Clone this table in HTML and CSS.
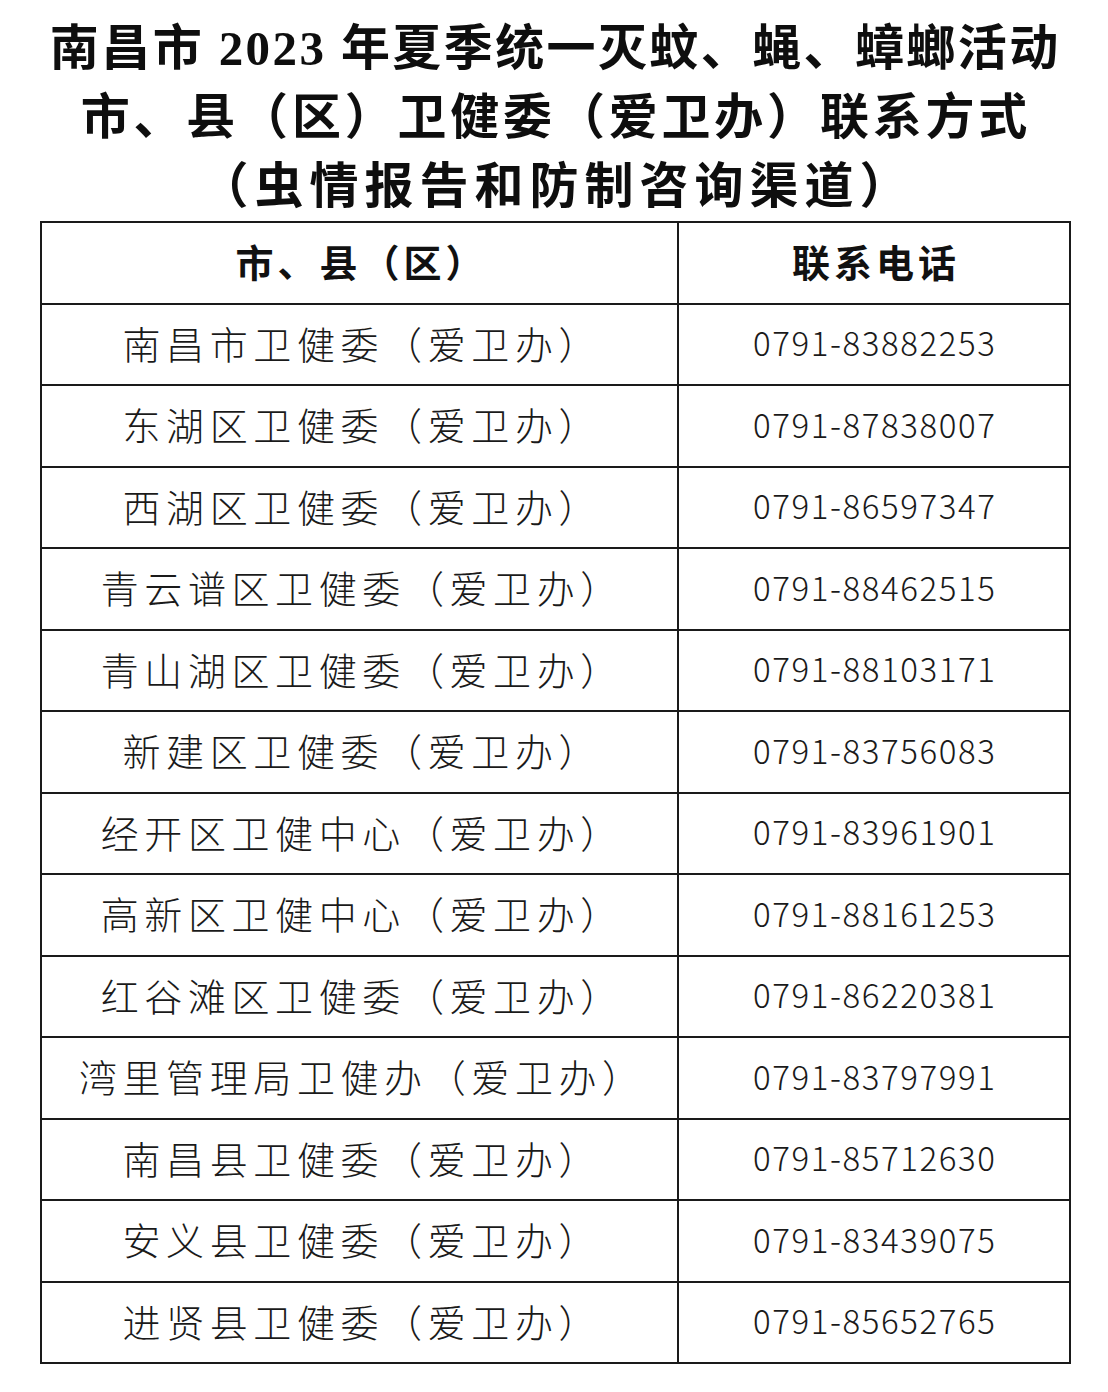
FILE: index.html
```html
<!DOCTYPE html>
<html lang="zh-CN">
<head>
<meta charset="utf-8">
<title>南昌市2023年夏季统一灭蚊、蝇、蟑螂活动联系方式</title>
<link rel="stylesheet" href="styles.css">
</head>
<body>
<div class="title">
  <div class="t-line t1">南昌市 2023 年夏季统一灭蚊、蝇、蟑螂活动</div>
  <div class="t-line t2">市、县（区）卫健委（爱卫办）联系方式</div>
  <div class="t-line t3">（虫情报告和防制咨询渠道）</div>
</div>
<div class="grid">
  <div class="cell head">市、县（区）</div>
  <div class="cell head">联系电话</div>

  <div class="cell name">南昌市卫健委（爱卫办）</div>
  <div class="cell phone">0791-83882253</div>

  <div class="cell name">东湖区卫健委（爱卫办）</div>
  <div class="cell phone">0791-87838007</div>

  <div class="cell name">西湖区卫健委（爱卫办）</div>
  <div class="cell phone">0791-86597347</div>

  <div class="cell name">青云谱区卫健委（爱卫办）</div>
  <div class="cell phone">0791-88462515</div>

  <div class="cell name">青山湖区卫健委（爱卫办）</div>
  <div class="cell phone">0791-88103171</div>

  <div class="cell name">新建区卫健委（爱卫办）</div>
  <div class="cell phone">0791-83756083</div>

  <div class="cell name">经开区卫健中心（爱卫办）</div>
  <div class="cell phone">0791-83961901</div>

  <div class="cell name">高新区卫健中心（爱卫办）</div>
  <div class="cell phone">0791-88161253</div>

  <div class="cell name">红谷滩区卫健委（爱卫办）</div>
  <div class="cell phone">0791-86220381</div>

  <div class="cell name">湾里管理局卫健办（爱卫办）</div>
  <div class="cell phone">0791-83797991</div>

  <div class="cell name">南昌县卫健委（爱卫办）</div>
  <div class="cell phone">0791-85712630</div>

  <div class="cell name">安义县卫健委（爱卫办）</div>
  <div class="cell phone">0791-83439075</div>

  <div class="cell name">进贤县卫健委（爱卫办）</div>
  <div class="cell phone">0791-85652765</div>
</div>
</body>
</html>
```
FILE: styles.css
```css
html, body {
  margin: 0;
  padding: 0;
  background: #ffffff;
}

body {
  width: 1108px;
  height: 1392px;
  color: #141414;
  font-family: "Noto Sans CJK SC", sans-serif;
}

.title {
  padding-top: 14px;
  text-align: center;
  font-family: "Liberation Serif", "Noto Sans CJK SC", serif;
  font-weight: 700;
  font-size: 49px;
  line-height: 69px;
  color: #0e0e0e;
}

.t-line {
  white-space: nowrap;
}

.t1 {
  letter-spacing: 2.4px;
  padding-left: 2.4px;
}

.t2 {
  letter-spacing: 3.8px;
  padding-left: 3.8px;
}

.t3 {
  letter-spacing: 6px;
  padding-left: 6px;
}

.grid {
  margin-left: 40px;
  display: grid;
  grid-template-columns: 637px 392px;
  grid-auto-rows: 81.5px;
  width: max-content;
  border-top: 2px solid #1a1a1a;
  border-left: 2px solid #1a1a1a;
}

.cell {
  border-right: 2px solid #1a1a1a;
  border-bottom: 2px solid #1a1a1a;
  padding-bottom: 4px;
  display: flex;
  align-items: center;
  justify-content: center;
  white-space: nowrap;
}

.head {
  font-family: "Noto Sans CJK SC", sans-serif;
  font-weight: 700;
  font-size: 38px;
  letter-spacing: 4px;
  padding-left: 4px;
  color: #111;
}

.name {
  font-family: "Noto Sans CJK SC", sans-serif;
  font-weight: 300;
  font-size: 38px;
  letter-spacing: 5.6px;
  padding-left: 5.6px;
  color: #1a1a1a;
}

.phone {
  font-family: "Noto Sans CJK SC", sans-serif;
  font-weight: 300;
  font-size: 33px;
  letter-spacing: 1.6px;
  padding-left: 1.6px;
  color: #1a1a1a;
}
```
